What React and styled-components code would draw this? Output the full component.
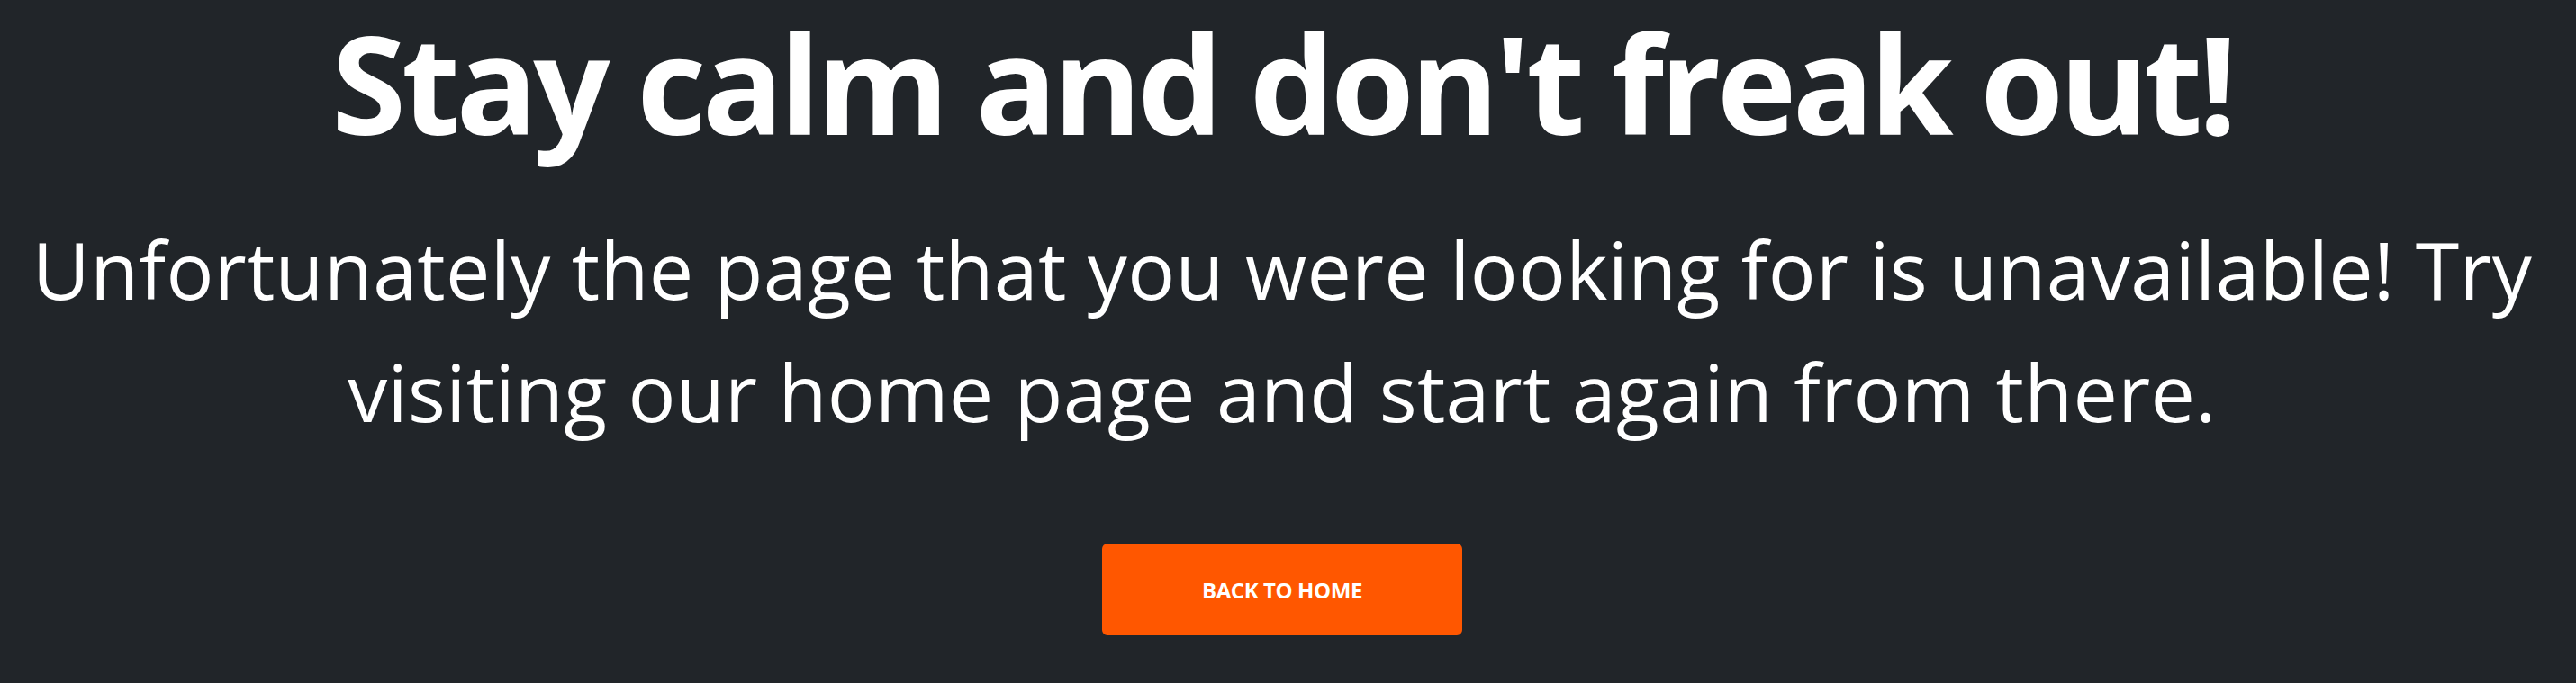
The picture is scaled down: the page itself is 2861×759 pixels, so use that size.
import React from 'react';
import styled, { createGlobalStyle } from 'styled-components';

const GlobalStyle = createGlobalStyle`
    html, body {
        margin: 0;
        padding: 0;
        background: #212529;
    }
    body {
        font-family: "Open Sans", "Noto Sans", "Liberation Sans", sans-serif;
        color: #ffffff;
    }
`;

const NotFound = () => {
    return (
        <Page>
            <GlobalStyle />
            <Title>Stay calm and don't freak out!</Title>
            <Message>
                Unfortunately the page that you were looking for is unavailable! Try
                visiting our home page and start again from there.
            </Message>
            <HomeButton href="#">BACK TO HOME</HomeButton>
        </Page>
    );
};

const Page = styled.main`
    min-height: 100vh;
    display: flex;
    flex-direction: column;
    align-items: center;
    text-align: center;
    padding: 2px 37px 0 24px;
    box-sizing: border-box;
`;

const Title = styled.h1`
    margin: 0;
    font-size: 150px;
    line-height: 1.2;
    font-weight: 700;
    letter-spacing: -4.7px;
`;

const Message = styled.p`
    margin: 49px 0 0;
    font-size: 88px;
    line-height: 136px;
    font-weight: 400;
    letter-spacing: 0.3px;
`;

const HomeButton = styled.a`
    margin-top: 101px;
    width: 400px;
    height: 102px;
    display: flex;
    align-items: center;
    justify-content: center;
    background: #ff5700;
    border-radius: 6px;
    color: #ffffff;
    font-size: 24px;
    font-weight: 700;
    letter-spacing: -0.4px;
    text-decoration: none;
`;

export default NotFound;
